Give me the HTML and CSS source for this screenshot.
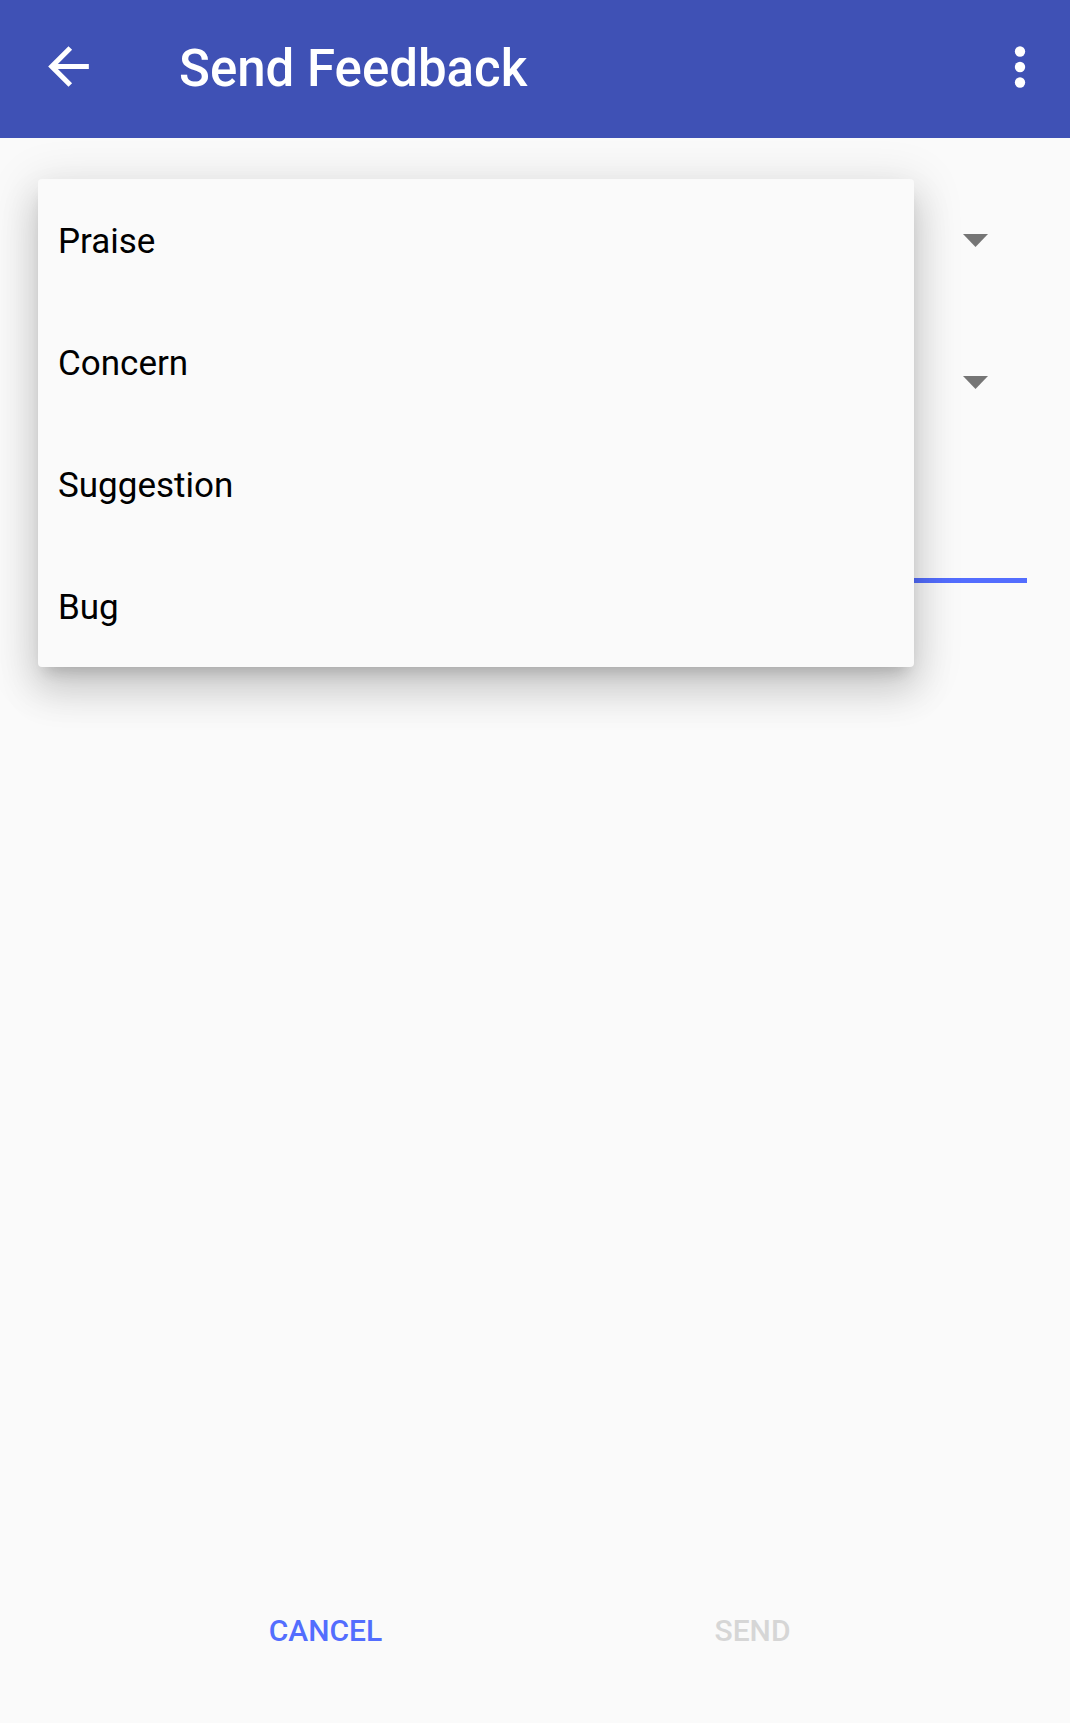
FILE: index.html
```html
<!DOCTYPE html>
<html lang="en">
<head>
<meta charset="utf-8">
<title>Send Feedback</title>
<link rel="stylesheet" href="styles.css">
</head>
<body>
<div class="page">
  <header class="appbar">
    <svg class="icon back" viewBox="0 0 24 24" width="61" height="61"><path fill="#fff" d="M20 11H7.83l5.59-5.59L12 4l-8 8 8 8 1.41-1.41L7.83 13H20v-2z"/></svg>
    <h1 class="title">Send Feedback</h1>
    <svg class="icon more" viewBox="0 0 24 24" width="62" height="62"><circle cx="12" cy="6" r="2" fill="#fff"/><circle cx="12" cy="12" r="2" fill="#fff"/><circle cx="12" cy="18" r="2" fill="#fff"/></svg>
  </header>
  <main class="form">
    <div class="spinner"><svg class="caret" viewBox="0 0 25 13" width="25" height="13"><polygon points="0,0 25,0 12.5,13" fill="#757575"/></svg></div>
    <div class="spinner second"><svg class="caret" viewBox="0 0 25 13" width="25" height="13"><polygon points="0,0 25,0 12.5,13" fill="#757575"/></svg></div>
    <div class="textfield"></div>
  </main>
  <footer class="actions">
    <button class="btn primary">CANCEL</button>
    <button class="btn disabled">SEND</button>
  </footer>
  <ul class="menu">
    <li class="menu-item">Praise</li>
    <li class="menu-item">Concern</li>
    <li class="menu-item">Suggestion</li>
    <li class="menu-item">Bug</li>
  </ul>
</div>
</body>
</html>
```
FILE: styles.css
```css
html, body {
  margin: 0;
  padding: 0;
  background: #fafafa;
}
body {
  font-family: Roboto, "Liberation Sans", sans-serif;
}
.page {
  position: relative;
  width: 1070px;
  height: 1723px;
  display: flex;
  flex-direction: column;
  background: #fafafa;
  overflow: hidden;
}
.appbar {
  height: 138px;
  box-sizing: border-box;
  background: #3f51b5;
  display: flex;
  align-items: center;
  padding: 0 19px 5px 38px;
  flex-shrink: 0;
}
.icon {
  display: block;
  flex-shrink: 0;
}
.title {
  margin: 4px 0 0 80px;
  flex: 1;
  color: #fff;
  font-family: Roboto, "Liberation Sans", sans-serif;
  font-weight: 500;
  font-size: 51px;
  line-height: 1;
}
.form {
  flex: 1;
  padding: 41px 43px 0;
  display: flex;
  flex-direction: column;
}
.spinner {
  height: 122px;
  display: flex;
  align-items: center;
  justify-content: flex-end;
  padding-right: 39px;
}
.spinner.second {
  margin-top: 20px;
}
.caret {
  display: block;
}
.textfield {
  height: 135px;
  border-bottom: 5px solid #536dfe;
}
.actions {
  height: 100px;
  margin-bottom: 43px;
  padding: 0 104px 0 112px;
  display: grid;
  grid-template-columns: 1fr 1fr;
  align-items: center;
  flex-shrink: 0;
}
.btn {
  background: none;
  border: 0;
  padding: 0;
  font-family: Roboto, "Liberation Sans", sans-serif;
  font-weight: 500;
  font-size: 30px;
  justify-self: center;
}
.btn.primary {
  color: #536dfe;
}
.btn.disabled {
  color: #d6d6d6;
}
.menu {
  position: absolute;
  top: 179px;
  left: 38px;
  width: 876px;
  margin: 0;
  padding: 0;
  list-style: none;
  background: #fafafa;
  border-radius: 4px;
  box-shadow: 0 24px 38px 3px rgba(0,0,0,0.12), 0 9px 46px 8px rgba(0,0,0,0.10), 0 11px 15px -7px rgba(0,0,0,0.18);
}
.menu-item {
  height: 122px;
  box-sizing: border-box;
  padding: 2px 0 0 20px;
  display: flex;
  align-items: center;
  font-size: 35px;
  color: #000;
}
```
